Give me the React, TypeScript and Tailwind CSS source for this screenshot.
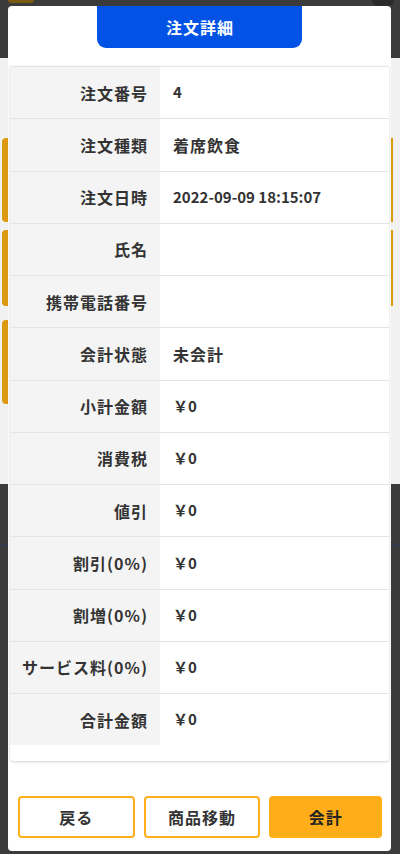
import React from 'react';

type Row = { label: string; value: string; small?: boolean };

const rows: Row[] = [
  { label: '注文番号', value: '4', small: true },
  { label: '注文種類', value: '着席飲食' },
  { label: '注文日時', value: '2022-09-09 18:15:07', small: true },
  { label: '氏名', value: '' },
  { label: '携帯電話番号', value: '' },
  { label: '会計状態', value: '未会計' },
  { label: '小計金額', value: '￥0', small: true },
  { label: '消費税', value: '￥0', small: true },
  { label: '値引', value: '￥0', small: true },
  { label: '割引(0%)', value: '￥0', small: true },
  { label: '割増(0%)', value: '￥0', small: true },
  { label: 'サービス料(0%)', value: '￥0', small: true },
  { label: '合計金額', value: '￥0', small: true },
];

const font = { fontFamily: '"Noto Sans CJK JP", "Noto Sans", sans-serif' };

// the page underneath the modal, dimmed by the overlay
function BackgroundPage() {
  return (
    <div className="flex h-full flex-col">
      <div className="flex h-[58px] items-start justify-between pl-[8px] pr-[6px]">
        <div className="h-[3px] w-[26px] rounded-b bg-[#7a5a10]" />
        <div className="h-[6px] w-[22px] rounded-b-full bg-[#2a2a2a]" />
      </div>
      <div className="flex h-[426px] flex-col gap-[8px] bg-[#f1f1f1] pl-[2px] pt-[80px]">
        <div className="mr-[7px] h-[84px] rounded-l-[4px] border-l-[6px] border-r-[2px] border-[#dc9a12]" />
        <div className="mr-[7px] h-[76px] rounded-l-[4px] border-l-[6px] border-r-[2px] border-[#dc9a12]" />
        <div className="mt-[6px] h-[84px] w-[6px] rounded-l-[4px] bg-[#dc9a12]" />
      </div>
      <div className="mt-[61px] h-px bg-[#2c3a66]" />
    </div>
  );
}

export default function App() {
  return (
    <div className="relative h-[854px] w-[400px] overflow-hidden bg-[#3b3b3b]" style={font}>
      <BackgroundPage />

      {/* modal */}
      <div className="absolute inset-0 flex pb-[3px] pl-[8px] pr-[9px] pt-[6px]">
        <div className="flex flex-1 flex-col rounded-[4px] bg-white">
          <div className="mx-auto flex h-[42px] w-[205px] shrink-0 items-center justify-center rounded-b-[9px] bg-[#0152e5] pl-[1px] text-[16px] font-bold tracking-[1px] text-white">
            注文詳細
          </div>

          <div className="mx-[2px] mt-[18px] rounded-b-[4px] bg-white pb-[16px] shadow-[0_1px_3px_rgba(0,0,0,0.18)]">
            {rows.map((r) => (
              <div key={r.label} className="flex h-[52.25px] border-t border-[#e3e4ea]">
                <div className="flex w-[150px] shrink-0 items-center justify-end bg-[#f4f4f4] pr-[12px] text-[16px] font-bold tracking-[1px] text-[#333333]">
                  {r.label}
                </div>
                <div
                  className={
                    r.small
                      ? 'flex flex-1 items-center pl-[13px] text-[15px] font-bold text-[#333333]'
                      : 'flex flex-1 items-center pl-[13px] text-[16px] font-bold tracking-[1px] text-[#333333]'
                  }
                >
                  {r.value}
                </div>
              </div>
            ))}
          </div>

          <div className="flex-1" />

          <div className="flex gap-[9px] pb-[13px] pl-[10px] pr-[9px]">
            <button className="flex h-[42px] flex-1 items-center justify-center rounded-[4px] border-2 border-[#ffae1c] bg-white text-[16px] font-bold tracking-[1px] text-[#333333]">
              戻る
            </button>
            <button className="flex h-[42px] flex-1 items-center justify-center rounded-[4px] border-2 border-[#ffae1c] bg-white text-[16px] font-bold tracking-[1px] text-[#333333]">
              商品移動
            </button>
            <button className="flex h-[42px] flex-1 items-center justify-center rounded-[4px] bg-[#ffae1a] text-[16px] font-bold tracking-[1px] text-[#222222]">
              会計
            </button>
          </div>
        </div>
      </div>
    </div>
  );
}
